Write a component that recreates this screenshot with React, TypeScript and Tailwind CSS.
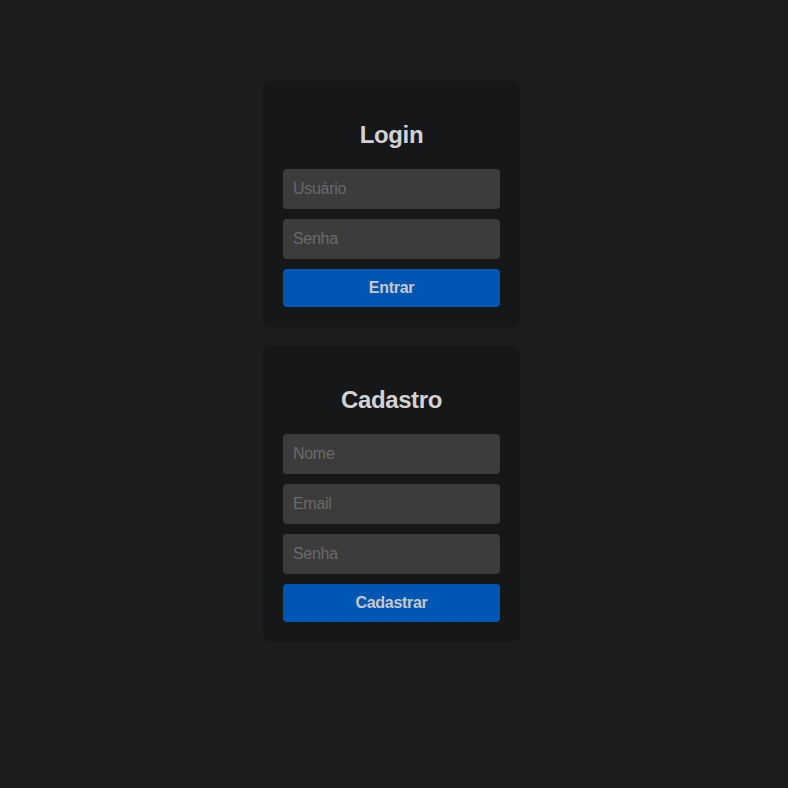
import React from "react";

function AuthCard({
  title,
  fields,
  action,
}: {
  title: string;
  fields: { placeholder: string; type: string }[];
  action: string;
}) {
  return (
    <form
      className="flex w-[257px] flex-col gap-[10px] rounded-lg bg-[#161719] px-5 pb-5 pt-5"
      onSubmit={(e) => e.preventDefault()}
    >
      <h2 className="mb-[10px] mt-5 text-center text-2xl font-bold leading-7 tracking-[-0.4px] text-[#d2d2d2]">
        {title}
      </h2>
      {fields.map((field) => (
        <input
          className="h-10 w-full rounded bg-[#3c3c3c] px-[10px] text-base tracking-[-0.3px] text-[#d2d2d2] outline-none placeholder:text-[#6a6a6a]"
          key={field.placeholder}
          placeholder={field.placeholder}
          type={field.type}
        />
      ))}
      <button
        className="h-[38px] w-full rounded bg-[#0057b3] text-base font-bold tracking-[-0.3px] text-[#c8c8c8]"
        type="submit"
      >
        {action}
      </button>
    </form>
  );
}

export default function App() {
  return (
    <div
      className="flex min-h-[788px] flex-col gap-[19px] bg-[#1b1c1e] pl-[263px] pt-[81px]"
      style={{ fontFamily: '"Liberation Sans", Arial, sans-serif' }}
    >
      <AuthCard
        action="Entrar"
        fields={[
          { placeholder: "Usuário", type: "text" },
          { placeholder: "Senha", type: "password" },
        ]}
        title="Login"
      />
      <AuthCard
        action="Cadastrar"
        fields={[
          { placeholder: "Nome", type: "text" },
          { placeholder: "Email", type: "email" },
          { placeholder: "Senha", type: "password" },
        ]}
        title="Cadastro"
      />
    </div>
  );
}
